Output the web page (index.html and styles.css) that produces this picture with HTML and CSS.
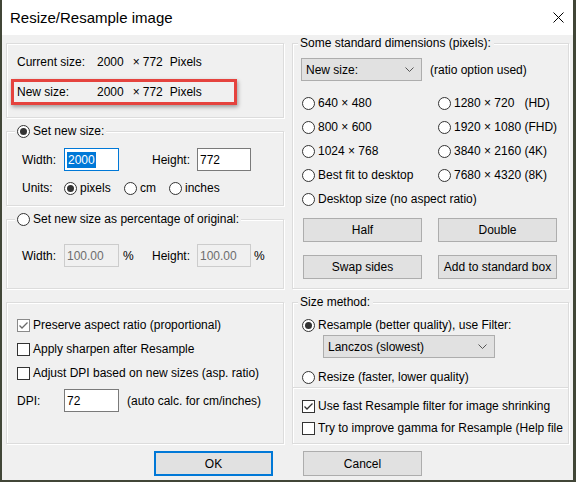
FILE: index.html
```html
<!DOCTYPE html>
<html>
<head>
<meta charset="utf-8">
<title>Resize/Resample image</title>
<link rel="stylesheet" href="styles.css">
</head>
<body>
<div class="window">
  <div class="titlebar">
    <span class="title">Resize/Resample image</span>
    <svg class="close" width="11" height="11" viewBox="0 0 11 11"><path d="M0.5 0.5 L10.5 10.5 M10.5 0.5 L0.5 10.5" stroke="#000" stroke-width="1" fill="none"/></svg>
  </div>
  <div class="dialog">
    <div class="columns">
      <div class="col">
        <div class="group g-info">
          <div class="info-row">
            <span class="info-label">Current size:</span>
            <span class="dims"><span>2000</span><span class="times">×</span><span>772</span><span class="unit">Pixels</span></span>
          </div>
          <div class="info-row highlight">
            <span class="info-label">New size:</span>
            <span class="dims"><span>2000</span><span class="times">×</span><span>772</span><span class="unit">Pixels</span></span>
          </div>
        </div>

        <div class="group g-set">
          <div class="caption caption-left"><span class="radio checked"></span><span>Set new size:</span></div>
          <div class="field-row">
            <span>Width:</span>
            <span class="textbox focused"><span class="sel">2000</span></span>
            <span></span>
            <span>Height:</span>
            <span class="textbox">772</span>
          </div>
          <div class="units-row">
            <span class="units-label">Units:</span>
            <span class="opt opt-px"><span class="radio checked"></span><span>pixels</span></span>
            <span class="opt opt-cm"><span class="radio"></span><span>cm</span></span>
            <span class="opt"><span class="radio"></span><span>inches</span></span>
          </div>
        </div>

        <div class="group g-pct">
          <div class="caption caption-left"><span class="radio"></span><span>Set new size as percentage of original:</span></div>
          <div class="field-row">
            <span>Width:</span>
            <span class="textbox disabled">100.00</span>
            <span class="pct">%</span>
            <span>Height:</span>
            <span class="textbox disabled">100.00</span>
            <span class="pct pct2">%</span>
          </div>
        </div>

        <div class="group g-opts">
          <div class="check-row"><span class="checkbox grey"><svg width="11" height="11" viewBox="0 0 11 11"><path d="M1.5 5.5 L4 8 L9.5 2.5" stroke="#6a6a6a" stroke-width="1.3" fill="none"/></svg></span><span>Preserve aspect ratio (proportional)</span></div>
          <div class="check-row"><span class="checkbox"></span><span>Apply sharpen after Resample</span></div>
          <div class="check-row"><span class="checkbox"></span><span>Adjust DPI based on new sizes (asp. ratio)</span></div>
          <div class="dpi-row">
            <span class="dpi-label">DPI:</span>
            <span class="textbox">72</span>
            <span class="dpi-note">(auto calc. for cm/inches)</span>
          </div>
        </div>
      </div>

      <div class="col">
        <div class="group g-std">
          <div class="caption caption-right"><span>Some standard dimensions (pixels):</span></div>
          <div class="combo-row">
            <span class="combo combo-std"><span>New size:</span><svg width="9" height="5" viewBox="0 0 9 5"><path d="M0.5 0.5 L4.5 4.5 L8.5 0.5" stroke="#555" stroke-width="1" fill="none"/></svg></span>
            <span class="combo-note">(ratio option used)</span>
          </div>
          <div class="radio-grid">
            <span class="opt"><span class="radio"></span><span>640 × 480</span></span>
            <span class="opt"><span class="radio"></span><span class="pre">1280 × 720   (HD)</span></span>
            <span class="opt"><span class="radio"></span><span>800 × 600</span></span>
            <span class="opt"><span class="radio"></span><span>1920 × 1080 (FHD)</span></span>
            <span class="opt"><span class="radio"></span><span>1024 × 768</span></span>
            <span class="opt"><span class="radio"></span><span>3840 × 2160 (4K)</span></span>
            <span class="opt"><span class="radio"></span><span>Best fit to desktop</span></span>
            <span class="opt"><span class="radio"></span><span>7680 × 4320 (8K)</span></span>
            <span class="opt span2"><span class="radio"></span><span>Desktop size (no aspect ratio)</span></span>
          </div>
          <div class="btn-grid">
            <span class="btn">Half</span>
            <span class="btn">Double</span>
            <span class="btn">Swap sides</span>
            <span class="btn">Add to standard box</span>
          </div>
        </div>

        <div class="group g-method">
          <div class="caption caption-right"><span>Size method:</span></div>
          <div class="method-row"><span class="radio checked"></span><span>Resample (better quality), use Filter:</span></div>
          <span class="combo combo-filter"><span>Lanczos (slowest)</span><svg width="9" height="5" viewBox="0 0 9 5"><path d="M0.5 0.5 L4.5 4.5 L8.5 0.5" stroke="#555" stroke-width="1" fill="none"/></svg></span>
          <div class="method-row resize-row"><span class="radio"></span><span>Resize (faster, lower quality)</span></div>
        </div>
        <div class="group g-fast">
          <div class="check-row"><span class="checkbox"><svg width="11" height="11" viewBox="0 0 11 11"><path d="M1.5 5.5 L4 8 L9.5 2.5" stroke="#333" stroke-width="1.3" fill="none"/></svg></span><span>Use fast Resample filter for image shrinking</span></div>
          <div class="check-row"><span class="checkbox"></span><span>Try to improve gamma for Resample (Help file</span></div>
        </div>
      </div>
    </div>

    <div class="actions">
      <span class="btn btn-ok">OK</span>
      <span class="btn">Cancel</span>
    </div>
  </div>
</div>
</body>
</html>
```
FILE: styles.css
```css
html, body {
  margin: 0;
  padding: 0;
}
body {
  font-family: "Liberation Sans", Arial, sans-serif;
  font-size: 12px;
  color: #000;
  background: #f0f0f0;
}
.window {
  width: 576px;
  height: 482px;
  box-sizing: border-box;
  border-style: solid;
  border-color: #414637;
  border-width: 0 3px 2px 2px;
  background: #f0f0f0;
  display: flex;
  flex-direction: column;
  overflow: hidden;
}
.titlebar {
  flex: none;
  height: 35px;
  background: #fff;
  display: flex;
  align-items: center;
  justify-content: space-between;
  padding: 0 9px 0 8px;
}
.title {
  font-size: 15px;
  color: #000;
}
.close {
  display: block;
}
.dialog {
  padding: 8px 4px 0 4px;
}
.columns {
  display: grid;
  grid-template-columns: 278px 277px;
  column-gap: 8px;
}
.col {
  display: flex;
  flex-direction: column;
}
.group {
  position: relative;
  box-sizing: border-box;
  border: 1px solid #dcdcdc;
  box-shadow: inset 1px 1px 0 #fff, 1px 1px 0 #fff;
}
.caption {
  position: absolute;
  top: -9px;
  height: 16px;
  padding: 0 2px;
  background: #f0f0f0;
  display: flex;
  align-items: center;
  gap: 3px;
  white-space: nowrap;
}
.caption-left { left: 8px; }
.caption-right { left: 5px; padding: 0 3px 0 2px; }

/* radio & checkbox */
.radio {
  flex: none;
  width: 13px;
  height: 13px;
  box-sizing: border-box;
  border: 1px solid #333;
  border-radius: 50%;
  background: #fff;
  display: inline-grid;
  place-items: center;
}
.radio.checked::after {
  content: "";
  width: 7px;
  height: 7px;
  border-radius: 50%;
  background: #333;
}
.checkbox {
  flex: none;
  width: 13px;
  height: 13px;
  box-sizing: border-box;
  border: 1px solid #333;
  background: #fff;
  display: inline-grid;
  place-items: center;
}
.checkbox.grey {
  border-color: #8a8a8a;
}
.checkbox svg { display: block; }

/* textboxes */
.textbox {
  box-sizing: border-box;
  height: 23px;
  border: 1px solid #7a7a7a;
  background: #fff;
  padding-left: 2px;
  display: flex;
  align-items: center;
  white-space: nowrap;
}
.textbox.focused {
  border-color: #0078d7;
}
.textbox.disabled {
  border-color: #cccccc;
  background: #f0f0f0;
  color: #6d6d6d;
}
.sel {
  background: #0078d7;
  color: #fff;
  line-height: 16px;
  padding: 0 1px;
}

/* group 1 */
.g-info {
  height: 75px;
  padding-top: 8px;
}
.info-row {
  display: flex;
  align-items: center;
  height: 20px;
  padding-left: 10px;
  white-space: nowrap;
}
.info-label {
  width: 80px;
  flex: none;
}
.dims {
  display: flex;
}
.times { margin: 0 3px 0 9px; }
.unit { margin-left: 7px; }
.highlight {
  box-sizing: border-box;
  width: 226px;
  height: 26px;
  margin: 7px 0 0 4px;
  padding-left: 3px;
  border: 3px solid #e5433e;
  box-shadow: 1px 2px 4px rgba(0, 0, 0, 0.35);
}

/* group 2/3 */
.g-set {
  height: 75px;
  margin-top: 13px;
  padding-top: 16px;
}
.g-pct {
  height: 70px;
  margin-top: 13px;
  padding-top: 24px;
}
.field-row {
  display: grid;
  grid-template-columns: 42px 55px 33px 45px 54px auto;
  align-items: center;
  height: 23px;
  padding-left: 15px;
}
.pct { padding-left: 4px; }
.pct2 { padding-left: 3px; }
.units-row {
  display: flex;
  align-items: center;
  height: 16px;
  margin-top: 9px;
  padding-left: 15px;
}
.units-label { width: 42px; flex: none; }
.opt {
  display: flex;
  align-items: center;
  gap: 3px;
  white-space: nowrap;
}
.opt-px { width: 60px; flex: none; }
.opt-cm { width: 45px; flex: none; }

/* group 4 */
.g-opts {
  height: 142px;
  margin-top: 13px;
  padding: 14px 0 0 10px;
}
.check-row {
  display: flex;
  align-items: center;
  gap: 3px;
  height: 16px;
  margin-bottom: 8px;
  white-space: nowrap;
}
.dpi-row {
  display: flex;
  align-items: center;
  height: 23px;
}
.dpi-label { width: 47px; flex: none; }
.dpi-row .textbox { width: 55px; }
.dpi-note { margin-left: 8px; }

/* right column */
.g-std {
  height: 246px;
  padding-top: 14px;
}
.combo-row {
  display: flex;
  align-items: center;
  padding-left: 8px;
}
.combo {
  box-sizing: border-box;
  height: 23px;
  background: #e1e1e1;
  border: 1px solid #adadad;
  display: flex;
  align-items: center;
  justify-content: space-between;
  padding: 0 7px 0 4px;
}
.combo svg { display: block; }
.combo-std { width: 121px; }
.combo-note { margin-left: 8px; }
.radio-grid {
  display: grid;
  grid-template-columns: 136px auto;
  grid-auto-rows: 24px;
  align-items: center;
  margin-top: 10px;
  padding-left: 9px;
}
.span2 { grid-column: 1 / 3; }
.pre { white-space: pre; }
.btn-grid {
  display: grid;
  grid-template-columns: 119px 119px;
  grid-auto-rows: 24px;
  column-gap: 16px;
  row-gap: 13px;
  margin-top: 7px;
  padding-left: 10px;
}
.btn {
  box-sizing: border-box;
  background: #e1e1e1;
  border: 1px solid #adadad;
  display: flex;
  align-items: center;
  justify-content: center;
  white-space: nowrap;
}

.g-method {
  height: 86px;
  margin-top: 13px;
  padding: 14px 0 0 9px;
}
.method-row {
  display: flex;
  align-items: center;
  gap: 3px;
  height: 16px;
  white-space: nowrap;
}
.combo-filter {
  width: 172px;
  margin: 2px 0 0 21px;
}
.resize-row { margin-top: 11px; }

.g-fast {
  height: 56px;
  border-top: none;
  padding: 10px 0 0 9px;
  overflow: hidden;
}
.g-fast .check-row { margin-bottom: 6px; }

/* bottom buttons */
.actions {
  display: flex;
  gap: 30px;
  margin-top: 7px;
  padding-left: 148px;
}
.actions .btn {
  width: 119px;
  height: 25px;
}
.btn-ok {
  border: 2px solid #0078d7;
}
```
